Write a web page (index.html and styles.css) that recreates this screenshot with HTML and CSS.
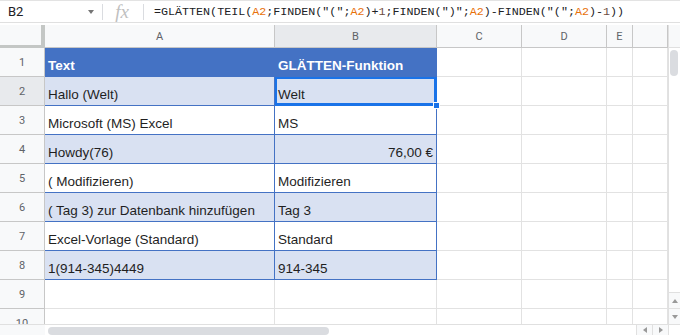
FILE: index.html
```html
<!DOCTYPE html>
<html lang="de">
<head>
<meta charset="utf-8">
<title>GLÄTTEN-Funktion</title>
<link rel="stylesheet" href="styles.css">
</head>
<body>
<div class="fbar">
  <div class="namebox"><span class="ref">B2</span><span class="caret"></span></div>
  <div class="sep"></div>
  <div class="fx">fx</div>
  <div class="sep"></div>
  <div class="formula">=GLÄTTEN<span class="p1">(</span>TEIL<span class="p2">(</span><span class="rf">A2</span>;FINDEN<span class="p3">(</span>"(";<span class="rf">A2</span><span class="p3">)</span>+<span class="num">1</span>;FINDEN<span class="p3">(</span>")";<span class="rf">A2</span><span class="p3">)</span>-FINDEN<span class="p3">(</span>"(";<span class="rf">A2</span><span class="p3">)</span>-<span class="num">1</span><span class="p2">)</span><span class="p1">)</span></div>
</div>
<div class="main">
  <div class="sheet">
    <div class="grid">
      <div class="corner"></div>
      <div class="ch">A</div>
      <div class="ch sel">B</div>
      <div class="ch">C</div>
      <div class="ch">D</div>
      <div class="ch">E</div>
      <div class="ch"></div>

      <div class="rh">1</div>
      <div class="c t hd">Text</div>
      <div class="c t hd">GLÄTTEN-Funktion</div>
      <div class="c"></div><div class="c"></div><div class="c"></div><div class="c"></div>

      <div class="rh sel">2</div>
      <div class="c t alt">Hallo (Welt)</div>
      <div class="c t alt active">Welt<span class="handle"></span></div>
      <div class="c"></div><div class="c"></div><div class="c"></div><div class="c"></div>

      <div class="rh">3</div>
      <div class="c t">Microsoft (MS) Excel</div>
      <div class="c t">MS</div>
      <div class="c"></div><div class="c"></div><div class="c"></div><div class="c"></div>

      <div class="rh">4</div>
      <div class="c t alt">Howdy(76)</div>
      <div class="c t alt right">76,00 €</div>
      <div class="c"></div><div class="c"></div><div class="c"></div><div class="c"></div>

      <div class="rh">5</div>
      <div class="c t">( Modifizieren)</div>
      <div class="c t">Modifizieren</div>
      <div class="c"></div><div class="c"></div><div class="c"></div><div class="c"></div>

      <div class="rh">6</div>
      <div class="c t alt">( Tag 3) zur Datenbank hinzufügen</div>
      <div class="c t alt">Tag 3</div>
      <div class="c"></div><div class="c"></div><div class="c"></div><div class="c"></div>

      <div class="rh">7</div>
      <div class="c t">Excel-Vorlage (Standard)</div>
      <div class="c t">Standard</div>
      <div class="c"></div><div class="c"></div><div class="c"></div><div class="c"></div>

      <div class="rh">8</div>
      <div class="c t alt">1(914-345)4449</div>
      <div class="c t alt">914-345</div>
      <div class="c"></div><div class="c"></div><div class="c"></div><div class="c"></div>

      <div class="rh">9</div>
      <div class="c"></div><div class="c"></div><div class="c"></div><div class="c"></div><div class="c"></div><div class="c"></div>

      <div class="rh last">10</div>
      <div class="c"></div><div class="c"></div><div class="c"></div><div class="c"></div><div class="c"></div><div class="c"></div>
    </div>
  </div>
  <div class="vscroll">
    <div class="vtop"></div>
    <div class="vtrack"><div class="vthumb"></div></div>
    <div class="arrow"><span class="tri up"></span></div>
    <div class="arrow"><span class="tri down"></span></div>
  </div>
</div>
<div class="hbar">
  <div class="hleft"></div>
  <div class="htrack"><div class="hthumb"></div></div>
  <div class="harrow"><span class="tri left"></span></div>
  <div class="harrow"><span class="tri rightt"></span></div>
  <div class="hcorner"></div>
</div>
</body>
</html>
```

FILE: styles.css
```css
* { box-sizing: border-box; }
html, body { margin: 0; padding: 0; }
body {
  width: 680px;
  height: 335px;
  overflow: hidden;
  background: #fff;
  font-family: Roboto, "Liberation Sans", sans-serif;
}

/* formula bar */
.fbar {
  height: 23px;
  border-top: 1px solid #e3e3e3;
  border-bottom: 1px solid #e0e0e0;
  display: flex;
  align-items: center;
  margin-bottom: 2px;
}
.namebox {
  width: 102px;
  display: flex;
  align-items: center;
  padding-left: 8px;
  padding-right: 8px;
}
.ref { font-size: 13px; color: #202124; flex: 1; }
.caret {
  width: 0; height: 0;
  border-left: 3.5px solid transparent;
  border-right: 3.5px solid transparent;
  border-top: 4px solid #757575;
}
.sep { width: 1px; height: 16px; background: #dadce0; }
.fx {
  width: 40px;
  text-align: center;
  font-family: "Liberation Serif", serif;
  font-style: italic;
  font-size: 19px;
  color: #c0c0c0;
  line-height: 20px;
  padding-right: 2px;
}
.formula {
  padding-left: 10px;
  padding-top: 1px;
  font-family: "Liberation Mono", "DejaVu Sans Mono", monospace;
  font-size: 11.7px;
  color: #202124;
  white-space: nowrap;
}
.rf { color: #e8710a; }
.num { color: #6d4c41; }
.p1, .p2, .p3 { color: #202124; }

/* main area */
.main { display: flex; height: 299px; }
.sheet { width: 668px; height: 299px; overflow: hidden; }
.grid {
  display: grid;
  grid-template-columns: 45px 230px 162px 85px 85px 26px 35px;
  grid-template-rows: 23px repeat(10, 29px);
}
.corner {
  background: #f8f9fa;
  border-right: 4px solid #c4c7c5;
  border-bottom: 3px solid #c4c7c5;
}
.ch {
  background: #f8f9fa;
  border-right: 1px solid #c7c7c7;
  border-bottom: 1px solid #c7c7c7;
  display: flex;
  align-items: center;
  justify-content: center;
  font-size: 11px;
  color: #5f6368;
}
.ch.sel { background: #e8eaed; }
.rh {
  background: #f8f9fa;
  border-right: 1px solid #c7c7c7;
  border-bottom: 1px solid #c7c7c7;
  display: flex;
  align-items: center;
  justify-content: center;
  font-size: 11px;
  color: #5f6368;
}
.rh.last { align-items: flex-start; padding-top: 8px; }
.rh.sel { background: #e8eaed; }
.c {
  border-right: 1px solid #e2e2e2;
  border-bottom: 1px solid #e2e2e2;
  position: relative;
}
.c.t {
  border-right-color: #4472c4;
  border-bottom-color: #4472c4;
  display: flex;
  align-items: flex-end;
  padding: 0 3px 2px 3px;
  font-family: "Liberation Sans", Arial, sans-serif;
  font-size: 13.5px;
  line-height: 16px;
  color: #1f1f1f;
  white-space: nowrap;
}
.c.hd {
  background: #4472c4;
  color: #fff;
  font-weight: bold;
}
.c.alt { background: #d9e1f2; }
.c.right { justify-content: flex-end; }
.c.active {
  box-shadow: inset 0 0 0 2px #1a73e8;
  border-right-color: #1a73e8;
  border-bottom-color: #1a73e8;
}
.handle {
  position: absolute;
  right: -4px;
  bottom: -4px;
  width: 7px;
  height: 7px;
  background: #1a73e8;
  border: 1px solid #fff;
  z-index: 2;
}

/* vertical scrollbar */
.vscroll {
  width: 12px;
  display: flex;
  flex-direction: column;
  border-left: 1px solid #e0e0e0;
}
.vtop { height: 23px; background: #f8f9fa; border-bottom: 1px solid #e0e0e0; }
.vtrack { flex: 1; padding: 2px 1px 0 1px; }
.vthumb { width: 8px; height: 26px; border-radius: 4px; background: #dadce0; }
.arrow {
  height: 16px;
  background: #f8f9fa;
  border-top: 1px solid #e0e0e0;
  display: flex;
  align-items: center;
  justify-content: center;
}
.tri { width: 0; height: 0; display: block; }
.tri.up { border-left: 3.5px solid transparent; border-right: 3.5px solid transparent; border-bottom: 4px solid #999; }
.tri.down { border-left: 3.5px solid transparent; border-right: 3.5px solid transparent; border-top: 4px solid #999; }
.tri.left { border-top: 3.5px solid transparent; border-bottom: 3.5px solid transparent; border-right: 4px solid #999; }
.tri.rightt { border-top: 3.5px solid transparent; border-bottom: 3.5px solid transparent; border-left: 4px solid #999; }

/* horizontal scrollbar */
.hbar {
  height: 11px;
  display: flex;
  border-top: 1px solid #e0e0e0;
}
.hleft { width: 45px; background: #f8f9fa; }
.htrack { flex: 1; padding: 2px 0 0 3px; }
.hthumb { width: 281px; height: 8px; border-radius: 4px; background: #dadce0; }
.harrow {
  width: 16px;
  background: #f8f9fa;
  border-left: 1px solid #e0e0e0;
  display: flex;
  align-items: center;
  justify-content: center;
}
.hcorner { width: 12px; background: #fff; border-left: 1px solid #e0e0e0; }
```
